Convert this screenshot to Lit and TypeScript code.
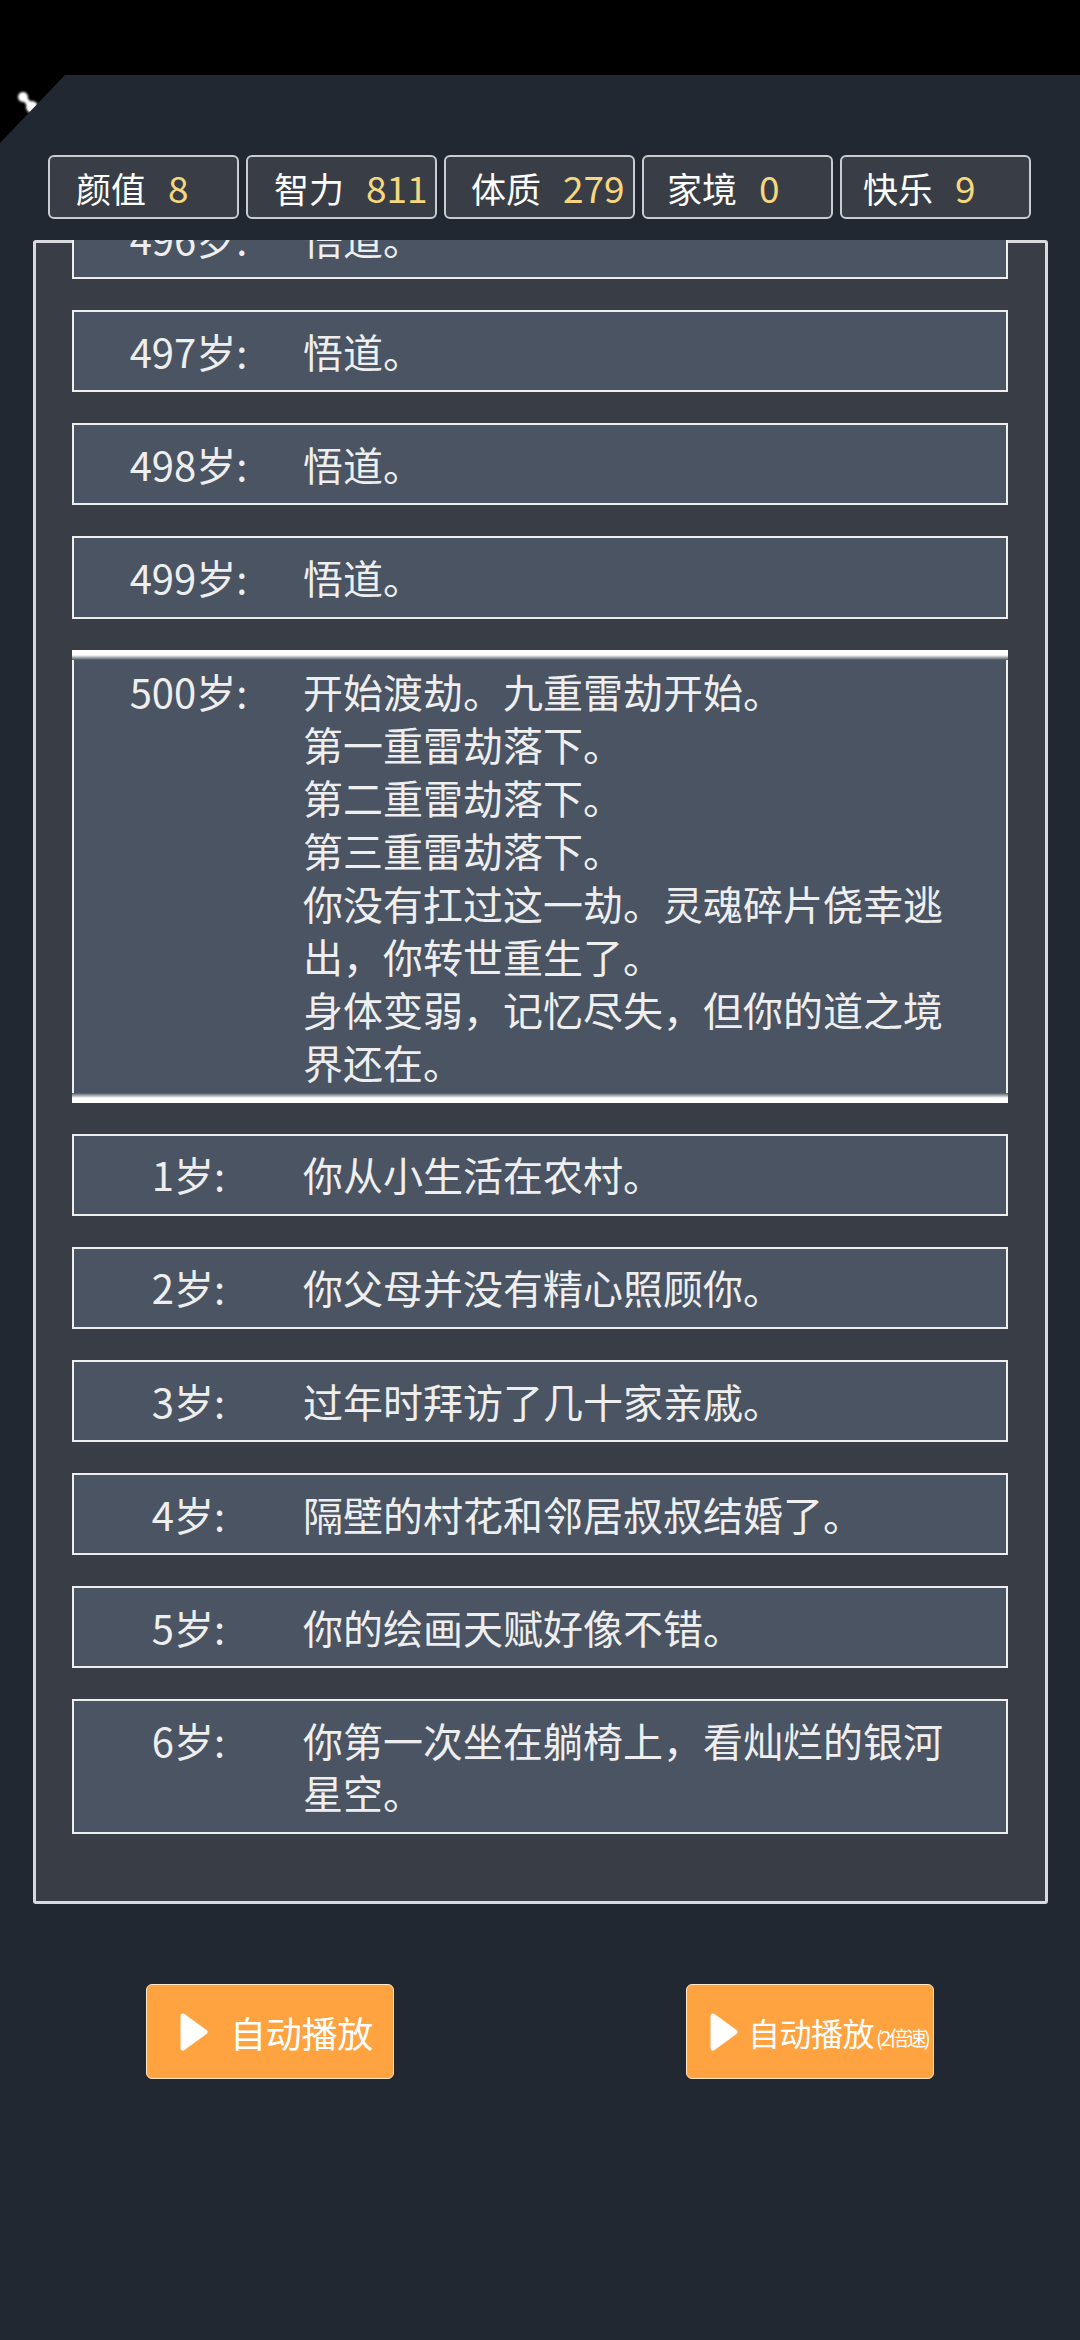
import { LitElement, css, html } from 'lit';
import { customElement } from 'lit/decorators.js';

// label offset differs per box in the reference
const STATS = [
  { name: '颜值', value: '8', inset: 26 },
  { name: '智力', value: '811', inset: 26 },
  { name: '体质', value: '279', inset: 25 },
  { name: '家境', value: '0', inset: 23 },
  { name: '快乐', value: '9', inset: 21 },
];

const ROWS = [
  { age: 496, lines: ['悟道。'] },
  { age: 497, lines: ['悟道。'] },
  { age: 498, lines: ['悟道。'] },
  { age: 499, lines: ['悟道。'] },
  {
    age: 500,
    big: true,
    lines: [
      '开始渡劫。九重雷劫开始。',
      '第一重雷劫落下。',
      '第二重雷劫落下。',
      '第三重雷劫落下。',
      '你没有扛过这一劫。灵魂碎片侥幸逃出，你转世重生了。',
      '身体变弱，记忆尽失，但你的道之境界还在。',
    ],
  },
  { age: 1, lines: ['你从小生活在农村。'] },
  { age: 2, lines: ['你父母并没有精心照顾你。'] },
  { age: 3, lines: ['过年时拜访了几十家亲戚。'] },
  { age: 4, lines: ['隔壁的村花和邻居叔叔结婚了。'] },
  { age: 5, lines: ['你的绘画天赋好像不错。'] },
  { age: 6, lines: ['你第一次坐在躺椅上，看灿烂的银河星空。'] },
];

const playIcon = html`<svg class="play" viewBox="0 0 28 38" aria-hidden="true">
  <path d="M3 3 L25 19 L3 35 Z" fill="#fff" stroke="#fff" stroke-width="5" stroke-linejoin="round"></path>
</svg>`;

@customElement('app-root')
export class AppRoot extends LitElement {
  static styles = css`
    :host {
      display: block;
      height: 2340px;
      overflow: hidden;
      position: relative;
      background: #222831;
      color: #eeeeee;
      font-family: 'Noto Sans CJK SC', 'Noto Sans', sans-serif;
    }

    .status {
      height: 75px;
      background: #000;
    }

    .corner {
      position: absolute;
      top: 75px;
      left: 0;
      width: 65px;
      height: 68px;
      background: #000;
      clip-path: polygon(0 0, 100% 0, 0 100%);
    }

    .corner svg {
      position: absolute;
      left: 16px;
      top: 15px;
      width: 26px;
      height: 26px;
      filter: blur(1px);
    }

    .stats {
      display: flex;
      gap: 7px;
      padding: 80px 0 21px 48px;
    }

    .stat {
      box-sizing: border-box;
      width: 191px;
      height: 64px;
      display: flex;
      align-items: center;
      gap: 22px;
      background: #393e46;
      border: 2px solid #c9ccd1;
      border-radius: 6px;
      font-size: 35px;
      line-height: 1;
      white-space: nowrap;
      color: #fff;
    }

    .stat b {
      font-weight: 400;
      font-size: 37px;
      color: #f6d77f;
    }

    .panel {
      box-sizing: border-box;
      height: 1664px;
      margin: 0 32px 0 33px;
      background: #393e46;
      border: 3px solid #d9dade;
      border-radius: 3px;
    }

    .list {
      height: 1658px;
      margin: -3px 0 0;
      padding: 0 37px 0 36px;
      overflow: hidden;
    }

    .rows {
      display: flex;
      flex-direction: column;
      gap: 31px;
      margin-top: -42.8px;
    }

    .row {
      position: relative;
      box-sizing: border-box;
      display: grid;
      grid-template-columns: 229px 650px;
      padding: 12.75px 0;
      background: #4a5462;
      border: 2px solid #eeeeee;
      font-size: 40px;
      line-height: 52.6px;
    }

    .row.big {
      border-width: 0 2px;
      padding: 15px 0 14px;
      line-height: 53px;
    }

    .row.big::before,
    .row.big::after {
      content: '';
      position: absolute;
      left: -2px;
      right: -2px;
      height: 10px;
    }

    .row.big::before {
      top: 0;
      background: linear-gradient(#fff 50%, #4a5462);
    }

    .row.big::after {
      bottom: 0;
      background: linear-gradient(#4a5462, #fff 50%);
    }

    .age {
      text-align: center;
    }

    .lines div {
      word-break: break-all;
    }

    .actions {
      display: flex;
      justify-content: space-between;
      padding: 80px 146px 0;
    }

    .btn {
      box-sizing: border-box;
      width: 248px;
      height: 95px;
      display: flex;
      align-items: center;
      background: #ffa341;
      border: 1px solid #ffe9c9;
      border-radius: 6px;
      color: #fff;
      font-size: 36px;
      white-space: nowrap;
    }

    .play {
      width: 28px;
      height: 38px;
      flex: none;
    }

    .btn.one {
      padding-left: 33px;
      gap: 22px;
      letter-spacing: -0.25px;
    }

    .btn.two {
      padding-left: 23px;
      gap: 10px;
      font-size: 32px;
    }

    .btn.two span {
      letter-spacing: -0.5px;
    }

    .btn small {
      font-size: 20px;
      letter-spacing: -2.5px;
      margin-left: 2px;
    }
  `;

  render() {
    return html`
      <div class="status"></div>
      <div class="corner">
        <svg viewBox="0 0 26 26" aria-hidden="true">
          <circle cx="7" cy="7" r="5" fill="#fff"></circle>
          <circle cx="16" cy="17" r="6" fill="#fff"></circle>
          <path d="M7 7 L16 17" stroke="#fff" stroke-width="5"></path>
        </svg>
      </div>
      <div class="stats">
        ${STATS.map(
          (s) => html`<div class="stat" style="padding-left:${s.inset}px">${s.name}<b>${s.value}</b></div>`,
        )}
      </div>
      <div class="panel">
        <div class="list">
          <div class="rows">
            ${ROWS.map(
              (r) => html`
                <div class="row ${r.big ? 'big' : ''}">
                  <div class="age">${r.age}岁:</div>
                  <div class="lines">${r.lines.map((l) => html`<div>${l}</div>`)}</div>
                </div>
              `,
            )}
          </div>
        </div>
      </div>
      <div class="actions">
        <div class="btn one">${playIcon}<span>自动播放</span></div>
        <div class="btn two">${playIcon}<span>自动播放<small>(2倍速)</small></span></div>
      </div>
    `;
  }
}
